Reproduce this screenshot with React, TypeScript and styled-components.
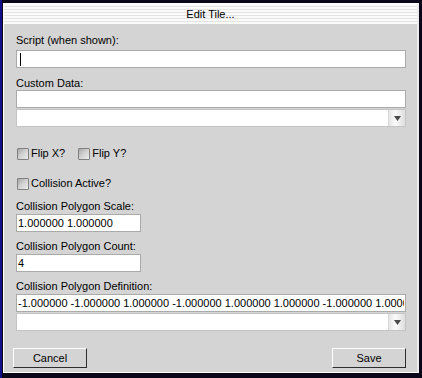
import React from "react";
import styled, { createGlobalStyle } from "styled-components";

const Global = createGlobalStyle`
  html, body { margin: 0; padding: 0; }
  body {
    width: 422px;
    height: 378px;
    overflow: hidden;
    background: linear-gradient(to right, #10108a 0 2px, #0a0718 2px);
    font-family: "Liberation Sans", Arial, sans-serif;
  }
`;

const Window = styled.div`
  box-sizing: border-box;
  margin: 3px 0 0 3px;
  width: 416px;
  height: 370px;
  background: #d4d4d4;
  border-top: 1px solid #ffffff;
  border-left: 1px solid #ffffff;
  border-right: 2px solid #ececec;
  border-bottom: 1px solid #ffffff;
  display: flex;
  flex-direction: column;
`;

const TitleBar = styled.div`
  height: 20px;
  flex: none;
  display: flex;
  align-items: center;
  justify-content: center;
  font-size: 11px;
  color: #000;
  background: repeating-linear-gradient(
    to bottom,
    #fbfbfb 0px,
    #fbfbfb 2px,
    #e4e4e4 2px,
    #e4e4e4 3px
  );
`;

const Body = styled.div`
  padding: 10px 11px 0 12px;
  display: flex;
  flex-direction: column;
`;

const Label = styled.div<{ $mt?: number }>`
  font-size: 11px;
  line-height: 13px;
  height: 13px;
  color: #000;
  margin-top: ${(p) => p.$mt ?? 0}px;
`;

const FieldWrap = styled.div<{ $mt?: number; $w?: number }>`
  position: relative;
  margin-top: ${(p) => p.$mt ?? 0}px;
  width: ${(p) => (p.$w ? `${p.$w}px` : "100%")};
`;

const TextInput = styled.input`
  box-sizing: border-box;
  display: block;
  width: 100%;
  height: 18px;
  margin: 0;
  padding: 0 1px;
  border: 1px solid #aaaaaa;
  background: #ffffff;
  font-family: "Liberation Sans", Arial, sans-serif;
  font-size: 11px;
  color: #000;
  outline: none;
`;

const Caret = styled.span`
  position: absolute;
  left: 4px;
  top: 3px;
  width: 1px;
  height: 13px;
  background: #000;
`;

const Combo = styled.div<{ $mt?: number }>`
  box-sizing: border-box;
  margin-top: ${(p) => p.$mt ?? 0}px;
  height: 18px;
  border: 1px solid #c4c4c4;
  background: #ffffff;
  display: flex;
  justify-content: flex-end;
`;

const ArrowBox = styled.div`
  width: 16px;
  height: 100%;
  display: flex;
  align-items: center;
  justify-content: center;
  background: linear-gradient(to right, #e6e6e6, #fafafa 40%, #dedede);
  border-left: 1px solid #d8d8d8;
`;

const CheckRow = styled.div<{ $mt?: number }>`
  display: flex;
  align-items: center;
  gap: 13px;
  margin-top: ${(p) => p.$mt ?? 0}px;
  padding-left: 1px;
`;

const CheckItem = styled.label`
  display: flex;
  align-items: center;
  gap: 2px;
  font-size: 11px;
  line-height: 13px;
  color: #000;
`;

const Box = styled.span`
  box-sizing: border-box;
  width: 12px;
  height: 12px;
  border: 1px solid #808080;
  border-radius: 1px;
  background: linear-gradient(135deg, #a6a6a6 0%, #d0d0d0 45%, #ececec 100%);
`;

const ButtonRow = styled.div`
  display: flex;
  justify-content: space-between;
  margin-top: 17px;
  padding-right: 0;
  margin-left: -3px;
`;

const Button = styled.button`
  box-sizing: border-box;
  width: 74px;
  height: 20px;
  padding: 0;
  background: #d4d4d4;
  border-top: 1px solid #ffffff;
  border-left: 1px solid #ffffff;
  border-right: 1px solid #2e2e2e;
  border-bottom: 1px solid #2e2e2e;
  font-family: "Liberation Sans", Arial, sans-serif;
  font-size: 11px;
  color: #000;
`;

const Arrow = () => (
  <svg width="7" height="5" viewBox="0 0 7 5">
    <path d="M0 0 H7 L3.5 5 Z" fill="#4a4a4a" />
  </svg>
);

const Check = ({ label }: { label: string }) => (
  <CheckItem>
    <Box />
    {label}
  </CheckItem>
);

export default function App() {
  return (
    <>
      <Global />
      <Window>
        <TitleBar>Edit Tile...</TitleBar>
        <Body>
          <Label>Script (when shown):</Label>
          <FieldWrap $mt={3}>
            <TextInput defaultValue="" />
            <Caret />
          </FieldWrap>

          <Label $mt={9}>Custom Data:</Label>
          <FieldWrap>
            <TextInput defaultValue="" />
          </FieldWrap>
          <Combo $mt={1}>
            <ArrowBox>
              <Arrow />
            </ArrowBox>
          </Combo>

          <CheckRow $mt={20}>
            <Check label="Flip X?" />
            <Check label="Flip Y?" />
          </CheckRow>

          <CheckRow $mt={17}>
            <Check label="Collision Active?" />
          </CheckRow>

          <Label $mt={10}>Collision Polygon Scale:</Label>
          <FieldWrap $mt={1} $w={125}>
            <TextInput defaultValue="1.000000 1.000000" />
          </FieldWrap>

          <Label $mt={8}>Collision Polygon Count:</Label>
          <FieldWrap $mt={1} $w={125}>
            <TextInput defaultValue="4" />
          </FieldWrap>

          <Label $mt={8}>Collision Polygon Definition:</Label>
          <FieldWrap $mt={1}>
            <TextInput defaultValue="-1.000000 -1.000000 1.000000 -1.000000 1.000000 1.000000 -1.000000 1.000000" />
          </FieldWrap>
          <Combo $mt={1}>
            <ArrowBox>
              <Arrow />
            </ArrowBox>
          </Combo>

          <ButtonRow>
            <Button>Cancel</Button>
            <Button>Save</Button>
          </ButtonRow>
        </Body>
      </Window>
    </>
  );
}
